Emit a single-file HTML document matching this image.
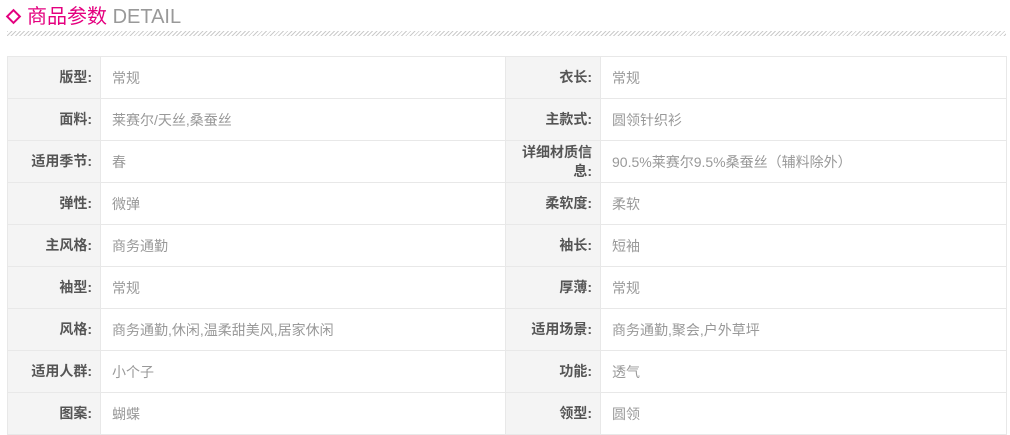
<!DOCTYPE html>
<html><head><meta charset="utf-8"><style>
body{margin:0;background:#fff;width:1010px;height:433px;overflow:hidden;font-family:"Liberation Sans","Noto Sans CJK SC",sans-serif;}
.h{position:absolute;left:7px;top:4px;height:26px;line-height:26px;font-size:20px;}
.d{position:absolute;left:8px;top:11px;width:7px;height:7px;border:2px solid #e4007f;transform:rotate(45deg);}
.h .t{position:absolute;left:20px;top:0;color:#e4007f;white-space:nowrap;}
.h .t span{color:#999;}
.hatch{position:absolute;left:7px;top:31px;width:999px;height:5px;background:repeating-linear-gradient(135deg,#ccc 0 1px,transparent 1px 3px);}
table{position:absolute;left:7px;top:56px;border-collapse:collapse;font-size:14px;table-layout:fixed;width:999px;}
td{height:42px;border:1px solid #e8e8e8;padding:0;box-sizing:border-box;overflow:hidden;}
td.l{background:#f4f4f4;color:#555;font-weight:bold;text-align:right;padding-right:8px;padding-left:10px;line-height:19px;}
td.v{color:#999;padding-left:11px;}
</style></head><body>
<div class="d"></div>
<div class="h"><div class="t">商品参数 <span>DETAIL</span></div></div>
<div class="hatch"></div>
<table>
<colgroup><col style="width:93px"><col style="width:405px"><col style="width:95px"><col style="width:406px"></colgroup>
<tr><td class="l">版型:</td><td class="v">常规</td><td class="l">衣长:</td><td class="v">常规</td></tr>
<tr><td class="l">面料:</td><td class="v">莱赛尔/天丝,桑蚕丝</td><td class="l">主款式:</td><td class="v">圆领针织衫</td></tr>
<tr><td class="l">适用季节:</td><td class="v">春</td><td class="l">详细材质信息:</td><td class="v">90.5%莱赛尔9.5%桑蚕丝（辅料除外）</td></tr>
<tr><td class="l">弹性:</td><td class="v">微弹</td><td class="l">柔软度:</td><td class="v">柔软</td></tr>
<tr><td class="l">主风格:</td><td class="v">商务通勤</td><td class="l">袖长:</td><td class="v">短袖</td></tr>
<tr><td class="l">袖型:</td><td class="v">常规</td><td class="l">厚薄:</td><td class="v">常规</td></tr>
<tr><td class="l">风格:</td><td class="v">商务通勤,休闲,温柔甜美风,居家休闲</td><td class="l">适用场景:</td><td class="v">商务通勤,聚会,户外草坪</td></tr>
<tr><td class="l">适用人群:</td><td class="v">小个子</td><td class="l">功能:</td><td class="v">透气</td></tr>
<tr><td class="l">图案:</td><td class="v">蝴蝶</td><td class="l">领型:</td><td class="v">圆领</td></tr>
</table>
</body></html>
